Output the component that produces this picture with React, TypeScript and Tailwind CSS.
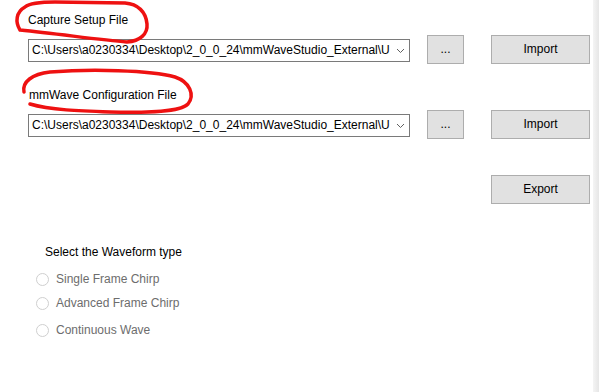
import React from "react";

const PATH = "C:\\Users\\a0230334\\Desktop\\2_0_0_24\\mmWaveStudio_External\\U";

function Combo() {
  return (
    <div className="mt-[4px] flex h-[23px] w-[382px] items-center border border-[#7a7a7a] bg-white">
      <span className="flex-1 whitespace-nowrap pl-[3px] text-[12px] leading-[15px] text-black">
        {PATH}
      </span>
      <svg width="17" height="21" viewBox="0 0 17 21" className="shrink-0">
        <path d="M5 9 L8.5 12.5 L12 9" fill="none" stroke="#606060" strokeWidth="1" />
      </svg>
    </div>
  );
}

function Btn({ label, w, className = "" }: { label: string; w: string; className?: string }) {
  return (
    <button
      type="button"
      className={`flex h-[29px] items-center justify-center border border-[#adadad] bg-[#e1e1e1] text-[12px] leading-[15px] text-black ${w} ${className}`}
    >
      {label}
    </button>
  );
}

function FileRow() {
  return (
    <div className="flex items-start">
      <Combo />
      <Btn label="..." w="w-[37px]" className="ml-[17px] text-[#333]" />
      <Btn label="Import" w="w-[99px]" className="ml-[27px]" />
    </div>
  );
}

function Radio({ label, className = "" }: { label: string; className?: string }) {
  return (
    <div className={`ml-[8px] flex h-[15px] items-center gap-[7px] ${className}`}>
      <span className="h-[13px] w-[13px] rounded-full border border-[#cfcfcf] bg-white" />
      <span className="text-[12px] leading-[15px] text-[#6d6d6d]">{label}</span>
    </div>
  );
}

export default function App() {
  return (
    <div
      className="relative flex h-[392px] w-[599px] overflow-hidden bg-white"
      style={{ fontFamily: '"Liberation Sans", Arial, sans-serif' }}
    >
      <div className="flex flex-1 flex-col pl-[28px] pt-[13px]">
        <p className="text-[12px] leading-[15px] text-black">Capture Setup File</p>
        <div className="mt-[7px]">
          <FileRow />
        </div>

        <p className="mt-[24px] pl-[1px] text-[12px] leading-[15px] text-black">mmWave Configuration File</p>
        <div className="mt-[7px]">
          <FileRow />
        </div>

        <div className="mt-[36px] flex">
          <Btn label="Export" w="w-[99px]" className="ml-[463px]" />
        </div>

        <p className="mt-[41px] pl-[17px] text-[12px] leading-[15px] text-black">Select the Waveform type</p>
        <Radio label="Single Frame Chirp" className="mt-[12px]" />
        <Radio label="Advanced Frame Chirp" className="mt-[9px]" />
        <Radio label="Continuous Wave" className="mt-[12px]" />
      </div>
      <div className="w-[6px] shrink-0 bg-gradient-to-r from-[#f4f4f4] to-[#e6e6e6]" />

      {/* hand-drawn annotations */}
      <svg
        className="pointer-events-none absolute left-0 top-0"
        width="599"
        height="392"
        viewBox="0 0 599 392"
      >
        <path
          d="M20 30 C15 22, 16 12, 25 7 C30 3, 40 2, 55 2 L125 3 C138 4, 146 12, 147 24 C148 34, 140 41, 127 42 C100 40, 60 34, 20 30"
          fill="none"
          stroke="#ee1111"
          strokeWidth="3.5"
          strokeLinecap="round"
        />
        <path
          d="M24 92 C22 82, 32 74, 50 72 C90 69, 150 70, 175 77 C190 82, 195 95, 188 104 C180 112, 150 113, 110 112 C80 111, 50 110, 30 104"
          fill="none"
          stroke="#ee1111"
          strokeWidth="3.5"
          strokeLinecap="round"
        />
      </svg>
    </div>
  );
}
